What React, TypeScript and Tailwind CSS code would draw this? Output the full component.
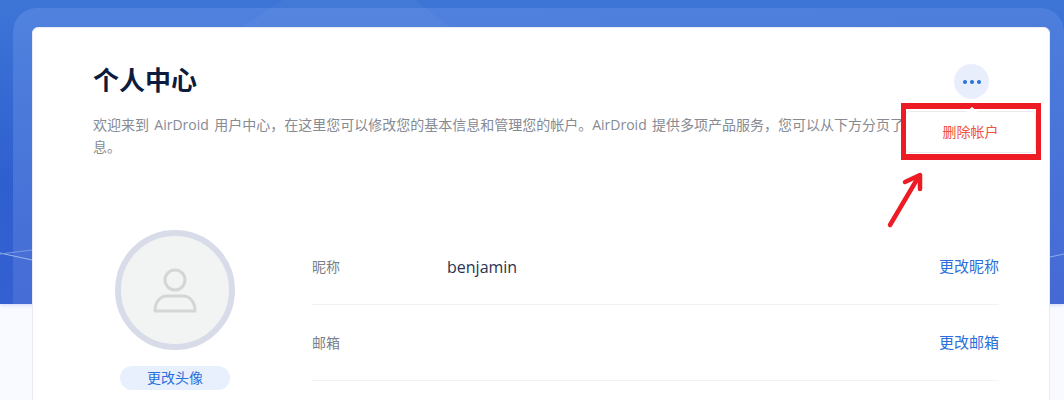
import React from "react";

const font = { fontFamily: '"Open Sans", "Noto Sans CJK SC", sans-serif' };

function Row({ label, value, action }: { label: string; value?: string; action: string }) {
  return (
    <div className="flex items-center h-[76px] border-b border-[#f1f2f4]">
      <div className="w-[135px] text-[14px] text-[#7b7f88]">{label}</div>
      <div className="flex-1 text-[16px] text-[#2b3350]">{value}</div>
      <button className="text-[15px] text-[#2a6fdb]">{action}</button>
    </div>
  );
}

export default function App() {
  return (
    <div
      className="relative h-[400px] w-[1064px] overflow-hidden bg-[#f9faff]"
      style={font}
    >
      <div className="absolute inset-x-0 top-0 h-[304px] bg-[linear-gradient(180deg,#3d75d6_0%,#2f5fcf_60%,#3460d0_100%)] shadow-[0_1px_4px_#c9d5f5]">
        <div className="absolute left-[13px] top-[8px] h-[296px] w-[1051px] rounded-t-[24px] bg-[linear-gradient(178deg,#5082de_0%,#4a78da_35%,#4569d4_100%)]" />
        <svg className="absolute inset-0" width="1064" height="304" fill="none">
          <path d="M243 27 L283 0 H415 L450 27 Z" fill="#ffffff" fillOpacity="0.035" />
          <path d="M0 253 L32 260" stroke="#9db8ee" strokeWidth="1" />
          <path d="M0 254 L32 250" stroke="#7a9be4" strokeWidth="1" />
          <path d="M1050 257 L1064 254" stroke="#8eaaea" strokeWidth="1" />
        </svg>
      </div>

      <div className="relative ml-[32px] mr-[14px] mt-[27px] h-[400px] rounded-[6px] border border-[#e9eaf2] bg-white pl-[60px] pr-[50px] pt-[35px]">
        <div className="flex items-start justify-between">
          <h1 className="text-[26px] font-bold leading-[34px] text-[#0d1c3d]">个人中心</h1>
          <button className="mr-[10px] mt-[1px] flex h-[35px] w-[35px] items-center justify-center gap-[3px] rounded-full bg-[#e8eefb]">
            <span className="h-[4px] w-[4px] rounded-full bg-[#2a6fdb]" />
            <span className="h-[4px] w-[4px] rounded-full bg-[#2a6fdb]" />
            <span className="h-[4px] w-[4px] rounded-full bg-[#2a6fdb]" />
          </button>
        </div>
        <p className="mt-[15px] w-[906px] text-[14px] leading-[22px] text-[#868a93] [word-spacing:1.7px]">
          欢迎来到 AirDroid 用户中心，在这里您可以修改您的基本信息和管理您的帐户。AirDroid 提供多项产品服务，您可以从下方分页了解更多相关信息。
        </p>

        <div className="mt-[72px] flex">
          <div className="ml-[22px] flex w-[120px] flex-col items-center">
            <div className="flex h-[120px] w-[120px] items-center justify-center rounded-full border-[6px] border-[#d8dce8] bg-[#f2f4f4]">
              <svg width="46" height="46" viewBox="0 0 46 46" fill="none" stroke="#d3d5d6" strokeWidth="3">
                <circle cx="23" cy="13" r="10" />
                <path d="M3 44 C3 34 9 29 15 29 H31 C37 29 43 34 43 44 Z" strokeLinejoin="round" />
              </svg>
            </div>
            <button className="mt-[16px] h-[24px] w-[110px] rounded-full bg-[#e8f0fd] pb-[2px] text-[14px] text-[#2a6fdb]">更改头像</button>
          </div>
          <div className="-mt-[1px] ml-[77px] flex-1">
            <Row label="昵称" value="benjamin" action="更改昵称" />
            <Row label="邮箱" action="更改邮箱" />
          </div>
        </div>
      </div>

      {/* dropdown popup */}
      <div className="absolute left-[905px] top-[111px] flex h-[42px] w-[131px] items-center justify-center rounded-[4px] border border-[#e9eaf0] bg-white pb-[2px] text-[14px] text-[#f0523d]">
        删除帐户
      </div>
      {/* red annotation box */}
      <div className="absolute left-[901px] top-[103px] h-[57px] w-[140px] border-x-[5px] border-y-[6px] border-[#ed1c24]" />
      {/* popup caret */}
      <svg className="absolute left-[963px] top-[107px]" width="18" height="6" fill="#ffffff">
        <path d="M0 5 L3 5 L9 0 L15 5 L18 5 L18 6 L0 6 Z" />
      </svg>
      {/* red annotation arrow */}
      <svg className="absolute left-[880px] top-[165px]" width="50" height="70" fill="none" stroke="#ed1c24" strokeWidth="4.5" strokeLinecap="round" strokeLinejoin="round">
        <path d="M10 60 L39 11" />
        <path d="M25 17 L40 10 L40 24" />
      </svg>
    </div>
  );
}
